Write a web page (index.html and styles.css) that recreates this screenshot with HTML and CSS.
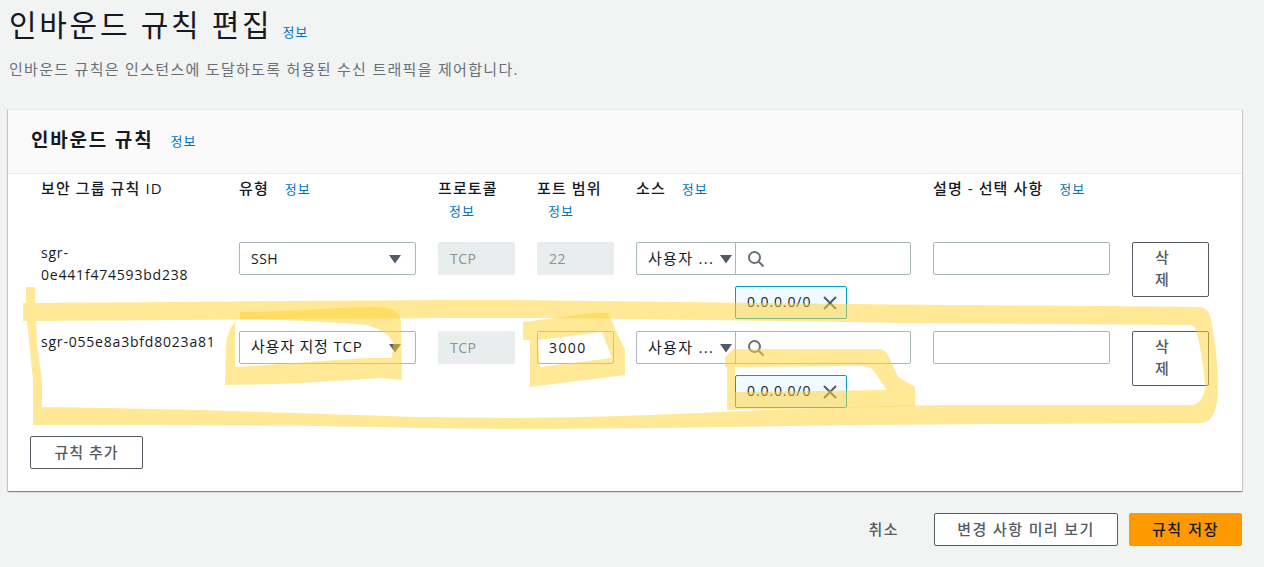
FILE: index.html
```html
<!DOCTYPE html>
<html lang="ko">
<head>
    <meta charset="UTF-8">
    <meta name="viewport" content="width=device-width, initial-scale=1.0">
    <title>인바운드 규칙 편집</title>
    <link rel="stylesheet" href="styles.css">
</head>
<body>
    <div class="page">
        <div class="page-title">
            <h1>인바운드 규칙 편집</h1>
            <a class="info-link">정보</a>
        </div>
        <p class="page-desc">인바운드 규칙은 인스턴스에 도달하도록 허용된 수신 트래픽을 제어합니다.</p>

        <section class="card">
            <div class="card-header">
                <h2>인바운드 규칙</h2>
                <a class="info-link">정보</a>
            </div>
            <div class="card-body">
                <div class="rule-grid head">
                    <div class="col-label">보안 그룹 규칙 ID</div>
                    <div class="col-label">유형 <a class="info-link">정보</a></div>
                    <div class="col-label">프로토콜 <a class="info-link">정보</a></div>
                    <div class="col-label">포트 범위 <a class="info-link">정보</a></div>
                    <div class="col-label">소스 <a class="info-link">정보</a></div>
                    <div class="col-label">설명 - 선택 사항 <a class="info-link">정보</a></div>
                    <div></div>
                </div>

                <div class="rule-grid row">
                    <div class="rule-id">sgr-<br>0e441f474593bd238</div>
                    <div class="field select">SSH<svg class="caret" viewBox="0 0 14 10"><path d="M1 1h12L7 9.500z"/></svg></div>
                    <div class="field disabled">TCP</div>
                    <div class="field disabled">22</div>
                    <div class="source">
                        <div class="source-input">
                            <div class="source-type">사용자 ...<svg class="caret" viewBox="0 0 14 10"><path d="M1 1h12L7 9.500z"/></svg></div>
                            <div class="source-search">
                                <svg class="search" viewBox="0 0 18 18"><circle cx="7.500" cy="7.500" r="5.500"/><path d="M11.500 11.500L16.500 16.500"/></svg>
                            </div>
                        </div>
                        <div class="token">0.0.0.0/0<svg class="close" viewBox="0 0 16 16"><path d="M2 2L14 14M14 2L2 14"/></svg></div>
                    </div>
                    <div class="field"></div>
                    <button class="btn btn-delete"><span>삭제</span></button>
                </div>

                <div class="rule-grid row">
                    <div class="rule-id">sgr-055e8a3bfd8023a81</div>
                    <div class="field select ko">사용자 지정 TCP<svg class="caret" viewBox="0 0 14 10"><path d="M1 1h12L7 9.500z"/></svg></div>
                    <div class="field disabled">TCP</div>
                    <div class="field number">3000</div>
                    <div class="source">
                        <div class="source-input">
                            <div class="source-type">사용자 ...<svg class="caret" viewBox="0 0 14 10"><path d="M1 1h12L7 9.500z"/></svg></div>
                            <div class="source-search">
                                <svg class="search" viewBox="0 0 18 18"><circle cx="7.500" cy="7.500" r="5.500"/><path d="M11.500 11.500L16.500 16.500"/></svg>
                            </div>
                        </div>
                        <div class="token">0.0.0.0/0<svg class="close" viewBox="0 0 16 16"><path d="M2 2L14 14M14 2L2 14"/></svg></div>
                    </div>
                    <div class="field"></div>
                    <button class="btn btn-delete"><span>삭제</span></button>
                </div>

                <button class="btn btn-add">규칙 추가</button>
            </div>
        </section>

        <div class="actions">
            <a class="cancel">취소</a>
            <button class="btn btn-preview">변경 사항 미리 보기</button>
            <button class="btn btn-save">규칙 저장</button>
        </div>
    </div>

    <!-- marker scribbles drawn over the screenshot -->
    <svg class="scribble" viewBox="0 0 1264 567">
        <path d="M26 287L35 287L35 303C200 302 350 300 510 300C700 302 900 305 1100 306L1200 307C1207 308 1209 312 1211 320C1215 340 1218 365 1218 385C1218 405 1215 423 1200 423L1000 424C800 425 650 429 510 429L420 428C300 425 150 425 33 425L33 380L27 321L23 321L23 303L26 303Z
                 M36 321L37 345L42 380L42 407C150 408 300 413 420 417L510 418C650 418 800 406 950 405L1193 405C1200 403 1205 396 1205 385C1204 365 1199 340 1196 330C1195 326 1193 325 1188 325L900 323C700 320 600 318 510 318C350 318 200 320 36 321Z"/>
        <path d="M240 312C290 312 340 307 375 307C393 307 400 312 401 322L402 380L380 378C320 382 270 385 225 385L226 345C227 335 230 328 235 322L235 367L367 358L392 358L393 343C390 335 383 330 367 325C330 322 290 320 240 319Z"/>
        <path d="M523 322L593 313L608 313L625 350L625 375L530 387L530 340L523 340Z M538 340L540 367L612 358L602 332Z"/>
        <path d="M725 357L733 349L877 349C882 349 885 351 887 353L898 377L915 387L915 406L727 410L727 367L725 367Z M735 367L735 392L887 390L873 370C870 367 867 366 863 366Z"/>
    </svg>
</body>
</html>
```

FILE: styles.css
```css
* {
    box-sizing: border-box;
}
html, body {
    height: 567px;
    overflow: hidden;
}
body {
    margin: 0;
    position: relative;
    background: #f2f3f3;
    color: #16191f;
    font-family: "Open Sans", "Noto Sans CJK KR", sans-serif;
    font-size: 14px;
}
a {
    text-decoration: none;
}
.page {
    padding: 0 22px 0 8px;
}
.page-title {
    display: flex;
    align-items: flex-end;
    height: 47px;
    padding: 3px 0 0 1px;
}
.page-title h1 {
    margin: 0;
    font-size: 30px;
    font-weight: 400;
    letter-spacing: 2.7px;
    line-height: 44px;
}
.page-title .info-link {
    margin-left: 10px;
    margin-bottom: 4px;
}
.info-link {
    color: #0073bb;
    font-size: 13px;
    font-weight: 400;
    letter-spacing: 1px;
    line-height: 22px;
    margin-left: 11px;
}
.page-desc {
    margin: 11px 0 0 1px;
    color: #687078;
    font-size: 15px;
    letter-spacing: 1.3px;
    line-height: 22px;
}
.card {
    margin-top: 29px;
    height: 382px;
    background: #fff;
    box-shadow: 0 1px 1px 0 rgba(0, 28, 36, .3), 1px 1px 1px 0 rgba(0, 28, 36, .15), -1px 1px 1px 0 rgba(0, 28, 36, .15);
    border-top: 1px solid #eaeded;
}
.card-header {
    display: flex;
    align-items: center;
    height: 64px;
    padding: 0 0 6px 23px;
    background: #fafafa;
    border-bottom: 1px solid #eaeded;
}
.card-header h2 {
    margin: 0;
    font-size: 19px;
    font-weight: 700;
    letter-spacing: 1.8px;
}
.card-header .info-link {
    margin: 4px 0 0 17px;
}
.card-body {
    padding: 3px 33px 0 22px;
}
.rule-grid {
    display: grid;
    grid-template-columns: 176px 177px 77px 77px 275px 177px 77px;
    column-gap: 22px;
    padding-left: 11px;
}
.rule-grid.head {
    height: 65px;
}
.rule-grid.row {
    height: 89px;
}
.col-label {
    font-size: 15px;
    font-weight: 500;
    letter-spacing: 1.1px;
    line-height: 22px;
}
.rule-id {
    letter-spacing: .8px;
    line-height: 22px;
}
.field {
    position: relative;
    height: 33px;
    padding: 0 11px;
    background: #fff;
    border: 1px solid #aab7b8;
    border-radius: 2px;
    letter-spacing: .5px;
    line-height: 31px;
}
.field.ko {
    font-size: 15px;
    letter-spacing: .8px;
    line-height: 29px;
}
.field.number {
    letter-spacing: 1.4px;
}
.field.disabled {
    background: #eaeded;
    border-color: #eaeded;
    color: #879596;
}
.caret {
    flex: none;
    width: 14px;
    height: 10px;
    fill: #545b64;
}
.select .caret {
    position: absolute;
    right: 13px;
    top: 11px;
}
.source-input {
    display: flex;
    height: 33px;
    background: #fff;
    border: 1px solid #aab7b8;
    border-radius: 2px;
}
.source-type {
    display: flex;
    align-items: center;
    justify-content: space-between;
    width: 99px;
    padding: 0 2px 2px 11px;
    border-right: 1px solid #aab7b8;
    font-size: 15px;
    letter-spacing: 1.3px;
}
.source-type .caret {
    margin-top: 2px;
}
.source-search {
    display: flex;
    align-items: center;
    padding-left: 11px;
}
.search {
    width: 18px;
    height: 18px;
    fill: none;
    stroke: #687078;
    stroke-width: 2;
}
.token {
    display: flex;
    align-items: center;
    justify-content: space-between;
    width: 112px;
    height: 33px;
    margin: 11px 0 0 99px;
    padding: 0 8px 2px 11px;
    background: #f1faff;
    border: 1px solid #00a1c9;
    border-radius: 2px;
    letter-spacing: .9px;
}
.close {
    width: 16px;
    height: 16px;
    margin-top: 2px;
    fill: none;
    stroke: #545b64;
    stroke-width: 2;
}
.btn {
    height: 33px;
    padding: 0 0 2px;
    background: #fff;
    border: 1px solid #545b64;
    border-radius: 2px;
    color: #545b64;
    font-family: inherit;
    font-size: 15px;
    font-weight: 500;
    letter-spacing: 1px;
}
.btn-delete {
    height: 55px;
    padding: 0 22px 3px;
    text-align: left;
    line-height: 22px;
}
.btn-delete span {
    display: block;
    width: 1em;
    word-break: break-all;
}
.btn-add {
    display: block;
    width: 113px;
    margin-top: 16px;
}
.actions {
    display: flex;
    align-items: center;
    justify-content: flex-end;
    margin-top: 22px;
}
.cancel {
    margin: 0 35px 3px 0;
    color: #545b64;
    font-size: 15px;
    font-weight: 500;
    letter-spacing: 1.5px;
}
.btn-preview {
    width: 184px;
    margin-right: 11px;
    letter-spacing: 1.4px;
}
.btn-save {
    width: 113px;
    background: #ff9900;
    border-color: #ff9900;
    color: #16191f;
    letter-spacing: 1.6px;
}
.scribble {
    position: absolute;
    top: 0;
    left: 0;
    width: 1264px;
    height: 567px;
    pointer-events: none;
}
.scribble path {
    fill: #ffd232;
    fill-opacity: .51;
    fill-rule: evenodd;
}
```
